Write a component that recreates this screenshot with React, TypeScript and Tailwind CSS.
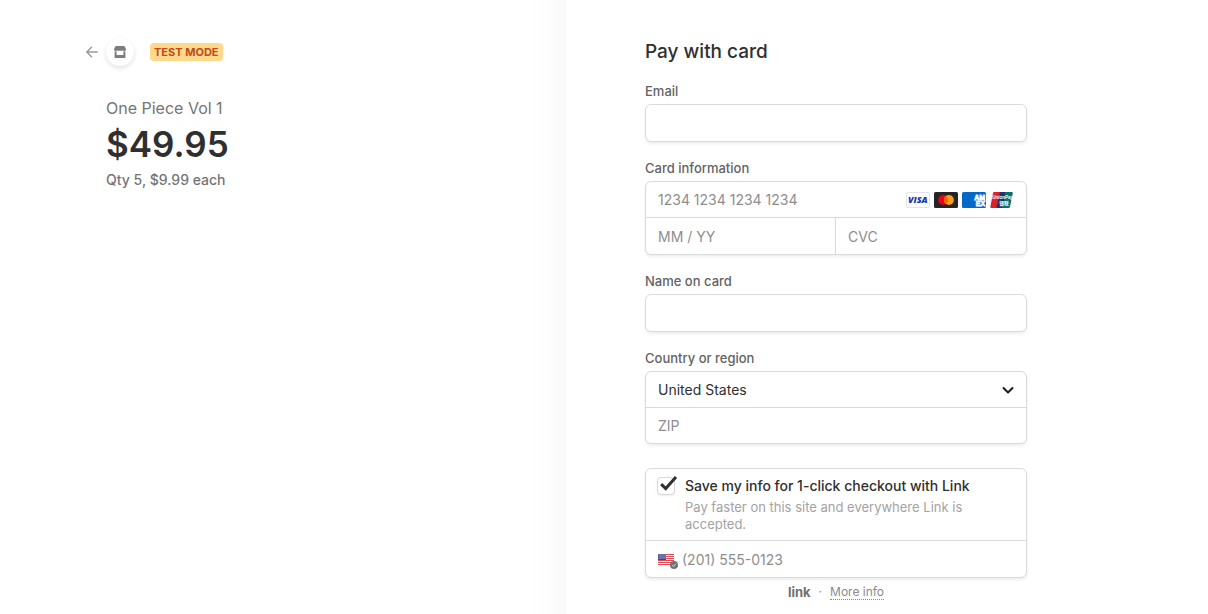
import { useState } from "react";

const box = "overflow-hidden rounded-md border border-[#dadada] bg-white shadow-[0_2px_3px_rgba(0,0,0,0.07)]";
const control = "block w-full bg-transparent px-3 text-sm text-[#303030] outline-none placeholder:text-[#8e8e8e]";
const label = "block text-[13px] font-medium leading-5 text-[#636363]";

function VisaIcon() {
  return (
    <svg viewBox="0 0 24 16" className="h-4 w-6" role="img" aria-label="Visa">
      <rect x=".5" y=".5" width="23" height="15" rx="1.5" fill="#fff" stroke="#e2e2ea" />
      <text x="11.8" y="11.3" textAnchor="middle" fontFamily="Open Sans, sans-serif" fontSize="9" fontWeight="800" fontStyle="italic" fill="#1733b5">VISA</text>
    </svg>
  );
}

function MastercardIcon() {
  return (
    <svg viewBox="0 0 24 16" className="h-4 w-6" role="img" aria-label="Mastercard">
      <rect width="24" height="16" rx="1.5" fill="#252525" />
      <circle cx="9.2" cy="8" r="5" fill="#eb001b" />
      <circle cx="14.9" cy="8" r="5" fill="#f79e1b" />
      <path d="M12.05 3.9a5 5 0 0 1 0 8.2 5 5 0 0 1 0-8.2Z" fill="#ff5f00" />
    </svg>
  );
}

function AmexIcon() {
  return (
    <svg viewBox="0 0 24 16" className="h-4 w-6" role="img" aria-label="American Express">
      <rect width="24" height="16" rx="1.5" fill="#0568c8" />
      <g fontFamily="Liberation Sans, sans-serif" fontSize="7" fontWeight="700" fill="#0568c8" stroke="#fff" strokeWidth=".8">
        <text x="12.2" y="7.800">AM</text>
        <text x="13.800" y="13.600">EX</text>
      </g>
    </svg>
  );
}

function UnionPayIcon() {
  return (
    <svg viewBox="0 0 24 16" className="h-4 w-6" role="img" aria-label="UnionPay">
      <path d="M4.200 0H10L6.700 16H1.300Q0 16 .3 14.700L3 1.200Q3.200 0 4.200 0Z" fill="#d9222a" />
      <path d="M9.600 0H16L12.800 16H6.300Z" fill="#1d3766" />
      <path d="M15.600 0h6.100q1.400 0 1.100 1.300L20 14.800Q19.700 16 18.500 16h-6.200Z" fill="#07706a" />
      <g fontFamily="Liberation Sans, sans-serif" fontWeight="700" fill="#fff">
        <text x="2.300" y="7.200" fontSize="4.500" fontStyle="italic">UnionPay</text>
        <text x="9.300" y="13.300" fontSize="4.800" fontFamily="Noto Sans CJK SC, sans-serif">银联</text>
      </g>
    </svg>
  );
}

function ShopIcon() {
  return (
    <svg viewBox="0 0 12 12" className="size-3" aria-hidden="true">
      <path d="M1.600 0h8.800L12 3.200q0 1.900-1.600 1.900-1 0-1.500-.8-.5.800-1.450.8T6 4.300q-.5.800-1.450.8T3.100 4.300q-.5.800-1.500.8Q0 5.100 0 3.200Z" fill="#7d7d7d" />
      <path d="M.6 5.200q1.200.6 2-.1V9h6.800V5.100q.8.700 2 .1V12H.6Z" fill="#7d7d7d" />
    </svg>
  );
}

function FlagIcon() {
  return (
    <svg viewBox="0 0 20 16" className="h-4 w-5 shrink-0" role="img" aria-label="United States">
      <rect y="1" width="16" height="11" fill="#fff" />
      {[1, 3, 5, 7, 9, 11].map((y) => (
        <rect key={y} y={y} width="16" height="1" fill="#df4a50" />
      ))}
      <rect y="1" width="8" height="6" fill="#39458c" />
      {[1.5, 2.5, 3.5, 4.5, 5.5].map((y, i) => (
        <path key={y} d={i % 2 ? "M1.500 " + y + "h6.500" : "M.5 " + y + "h7"} stroke="#c5cbe4" strokeWidth=".7" strokeDasharray="1 1" />
      ))}
      <circle cx="16" cy="12" r="4" fill="#737373" />
      <path d="m14.100 12.100 1.400 1.300 2.400-2.700" fill="none" stroke="#d5d5d5" strokeWidth="1" />
    </svg>
  );
}

export default function App() {
  const [save, setSave] = useState(true);
  return (
    <div className="grid min-h-screen grid-cols-[566fr_642fr] bg-white font-[Inter,'Liberation_Sans',sans-serif]">
      <section className="bg-linear-to-l from-[#fafafa] to-white to-[36px] pl-[86px] pt-[38px]">
        <header className="flex items-center">
          <a href="#back" aria-label="Back" className="mr-2 text-[#9b9b9b]">
            <svg viewBox="0 0 12 12" className="size-3" fill="none" stroke="currentColor" strokeWidth="1.500" strokeLinecap="round" strokeLinejoin="round" aria-hidden="true">
              <path d="M11.300 6H.9M5.500 1.300.8 6l4.700 4.700" />
            </svg>
          </a>
          <span className="flex size-7 items-center justify-center rounded-full bg-white shadow-[0_2px_5px_rgba(0,0,0,0.12)]">
            <ShopIcon />
          </span>
          <span className="ml-4 rounded bg-[#ffd88c] px-1 text-[11px] font-bold leading-[18px] text-[#bd4c18]">TEST MODE</span>
        </header>
        <div className="mt-8 pl-5 text-[#757575]">
          <h1 className="text-base leading-5">One Piece Vol 1</h1>
          <p className="mt-1 text-[35px] font-semibold leading-11 text-[#2f2f2f]">$49.95</p>
          <p className="mt-1 text-sm font-medium leading-5">Qty 5, $9.99 each</p>
        </div>
      </section>

      <main className="bg-white pl-[79px] pr-6 pt-[38px]">
        <form className="max-w-[382px]">
          <h2 className="text-[19px] font-medium leading-7 text-[#2f2f2f]">Pay with card</h2>
          <div className="mt-[15px] flex flex-col gap-4">
            <div>
              <label htmlFor="email" className={label}>Email</label>
              <div className={box + " mt-[3px]"}>
                <input id="email" type="email" className={control + " h-9"} />
              </div>
            </div>

            <fieldset>
              <legend className={label}>Card information</legend>
              <div className={box + " mt-[3px]"}>
                <div className="flex items-center border-b border-[#dadada] pr-3">
                  <input aria-label="Card number" placeholder="1234 1234 1234 1234" className={control + " h-[35px] min-w-0 flex-1"} />
                  <div className="flex gap-1">
                    <VisaIcon />
                    <MastercardIcon />
                    <AmexIcon />
                    <UnionPayIcon />
                  </div>
                </div>
                <div className="grid grid-cols-2 divide-x divide-[#dadada]">
                  <input aria-label="Expiration" placeholder="MM / YY" className={control + " h-9"} />
                  <input aria-label="CVC" placeholder="CVC" className={control + " h-9"} />
                </div>
              </div>
            </fieldset>

            <div>
              <label htmlFor="name" className={label}>Name on card</label>
              <div className={box + " mt-[3px]"}>
                <input id="name" className={control + " h-9"} />
              </div>
            </div>

            <div>
              <label htmlFor="country" className={label}>Country or region</label>
              <div className={box + " mt-[3px]"}>
                <div className="relative border-b border-[#dadada]">
                  <select id="country" className={control + " h-[35px] appearance-none"}>
                    <option>United States</option>
                  </select>
                  <svg viewBox="0 0 12 12" className="pointer-events-none absolute right-3 top-3 size-3" fill="none" stroke="#1a1a1a" strokeWidth="2" strokeLinecap="round" strokeLinejoin="round" aria-hidden="true">
                    <path d="m1.500 4 4.500 4.500L10.500 4" />
                  </svg>
                </div>
                <input aria-label="ZIP" placeholder="ZIP" className={control + " h-[35px]"} />
              </div>
            </div>
          </div>

          <div className={box + " mt-6"}>
            <div className="flex gap-2 border-b border-[#dadada] px-[11px] pb-[7px] pt-[7px]">
              <span className="relative h-5 w-5 shrink-0">
                <input
                  id="save"
                  type="checkbox"
                  checked={save}
                  onChange={(e) => setSave(e.target.checked)}
                  className="mt-px block size-[18px] appearance-none rounded-sm border border-[#d8d8d8] bg-white shadow-[0_1px_2px_rgba(0,0,0,0.08)]"
                />
                {save && (
                  <svg viewBox="0 0 18 16" className="pointer-events-none absolute left-[3px] top-0 h-4 w-[18px]" fill="none" stroke="#303030" strokeWidth="3" aria-hidden="true">
                    <path d="m1.200 8.200 4.500 4.300L16 1" />
                  </svg>
                )}
              </span>
              <div>
                <label htmlFor="save" className="block text-sm font-medium leading-5 text-[#2f2f2f]">Save my info for 1-click checkout with Link</label>
                <p className="mt-[3px] text-[13px] leading-[17px] text-[#a3a3a3]">Pay faster on this site and everywhere Link is accepted.</p>
              </div>
            </div>
            <div className="flex items-center pl-3">
              <span className="pt-1">
                <FlagIcon />
              </span>
              <input type="tel" aria-label="Phone number" placeholder="(201) 555-0123" className="h-9 min-w-0 flex-1 bg-transparent pl-1 text-sm outline-none placeholder:text-[#8e8e8e]" />
            </div>
          </div>

          <div className="mt-1 flex items-center justify-center gap-2 text-xs leading-5 text-[#8a8a8a]">
            <span className="text-[13px] font-bold text-[#707070]">link</span>
            <span>·</span>
            <a href="#more" className="border-b border-dotted border-[#8a8a8a] leading-[14px]">More info</a>
          </div>
        </form>
      </main>
    </div>
  );
}
